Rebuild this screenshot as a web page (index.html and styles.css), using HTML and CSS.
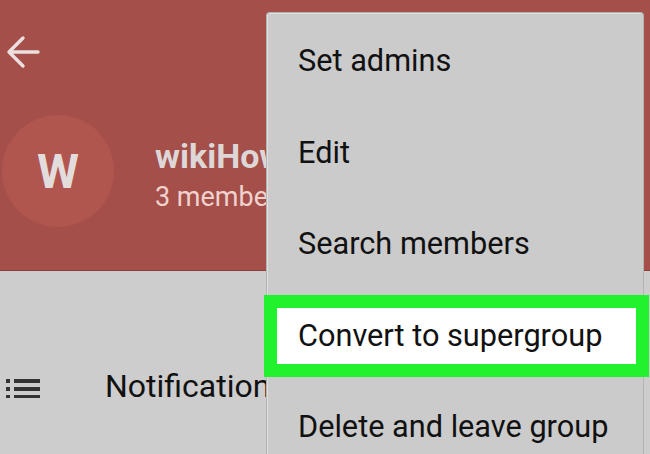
FILE: index.html
```html
<!DOCTYPE html>
<html>
<head>
<meta charset="utf-8">
<link rel="stylesheet" href="styles.css">
</head>
<body>
<div class="screen">
  <header class="header">
    <svg class="back" width="34" height="34" viewBox="0 0 34 34">
      <path d="M32 17H3M17 3L3 17L17 31" fill="none" stroke="#ecdfdf" stroke-width="3.4" stroke-linecap="round" stroke-linejoin="round"/>
    </svg>
    <div class="profile">
      <div class="avatar">W</div>
      <div class="info">
        <div class="name">wikiHow</div>
        <div class="members">3 members</div>
      </div>
    </div>
  </header>
  <div class="content">
    <div class="row">
      <svg class="list-icon" width="34" height="20" viewBox="0 0 34 20">
        <rect x="0" y="1" width="4" height="4" fill="#333"/>
        <rect x="0" y="9" width="4" height="4" fill="#333"/>
        <rect x="0" y="17" width="4" height="3" fill="#333"/>
        <rect x="8" y="1" width="26" height="4" fill="#333"/>
        <rect x="8" y="9" width="26" height="4" fill="#333"/>
        <rect x="8" y="17" width="26" height="3" fill="#333"/>
      </svg>
      <span class="row-label">Notifications</span>
    </div>
  </div>
  <div class="menu">
    <div class="menu-item">Set admins</div>
    <div class="menu-item">Edit</div>
    <div class="menu-item">Search members</div>
    <div class="menu-item hl">Convert to supergroup</div>
    <div class="menu-item">Delete and leave group</div>
  </div>
</div>
</body>
</html>
```

FILE: styles.css
```css
html, body {
  margin: 0;
  padding: 0;
}
body {
  width: 650px;
  height: 454px;
  overflow: hidden;
  font-family: Roboto, "Noto Sans", sans-serif;
  background: #cdcdcd;
}
.screen {
  position: relative;
  width: 650px;
  height: 454px;
  overflow: hidden;
}
.header {
  height: 271px;
  background: #a44f49;
  border-bottom: 1px solid #8c3f3a;
  padding: 35px 0 0 2px;
  box-sizing: border-box;
  display: flex;
  flex-direction: column;
  align-items: flex-start;
}
.back {
  display: block;
  margin-left: 4px;
}
.profile {
  margin-top: 46px;
  display: flex;
  align-items: flex-start;
}
.avatar {
  width: 112px;
  height: 112px;
  border-radius: 50%;
  background: #b1564f;
  color: #e2dcdc;
  font-size: 48px;
  font-weight: 700;
  display: flex;
  align-items: center;
  justify-content: center;
  flex-shrink: 0;
}
.info {
  margin-left: 41px;
  padding-top: 21px;
  white-space: nowrap;
}
.name {
  font-size: 34px;
  line-height: 40px;
  font-weight: 700;
  color: #ddd7d7;
}
.members {
  margin-top: 5px;
  font-size: 27px;
  line-height: 32px;
  color: #f0d2ce;
}
.content {
  padding: 95px 0 0 6px;
}
.row {
  display: flex;
  align-items: center;
  height: 40px;
}
.list-icon {
  display: block;
  margin-top: 4px;
  flex-shrink: 0;
}
.row-label {
  margin-left: 65px;
  font-size: 32px;
  line-height: 40px;
  color: #111;
  white-space: nowrap;
}
.menu {
  position: absolute;
  left: 266px;
  top: 12px;
  width: 376px;
  bottom: 0;
  background: #cbcbcb;
  border: 1px solid #b3b3b3;
  border-bottom: none;
  border-radius: 4px 4px 0 0;
  box-shadow: inset 1px 1px 0 #dedede;
  padding-top: 2px;
  z-index: 2;
}
.menu-item {
  height: 91.5px;
  line-height: 91.5px;
  padding-left: 31px;
  font-size: 30.7px;
  color: #111;
  white-space: nowrap;
}
.menu-item.hl {
  position: relative;
  isolation: isolate;
}
.menu-item.hl::before {
  content: "";
  position: absolute;
  left: -3px;
  right: -6px;
  top: 5px;
  height: 82px;
  box-sizing: border-box;
  background: #ffffff;
  border: 13px solid #22f22d;
  z-index: -1;
}
```
